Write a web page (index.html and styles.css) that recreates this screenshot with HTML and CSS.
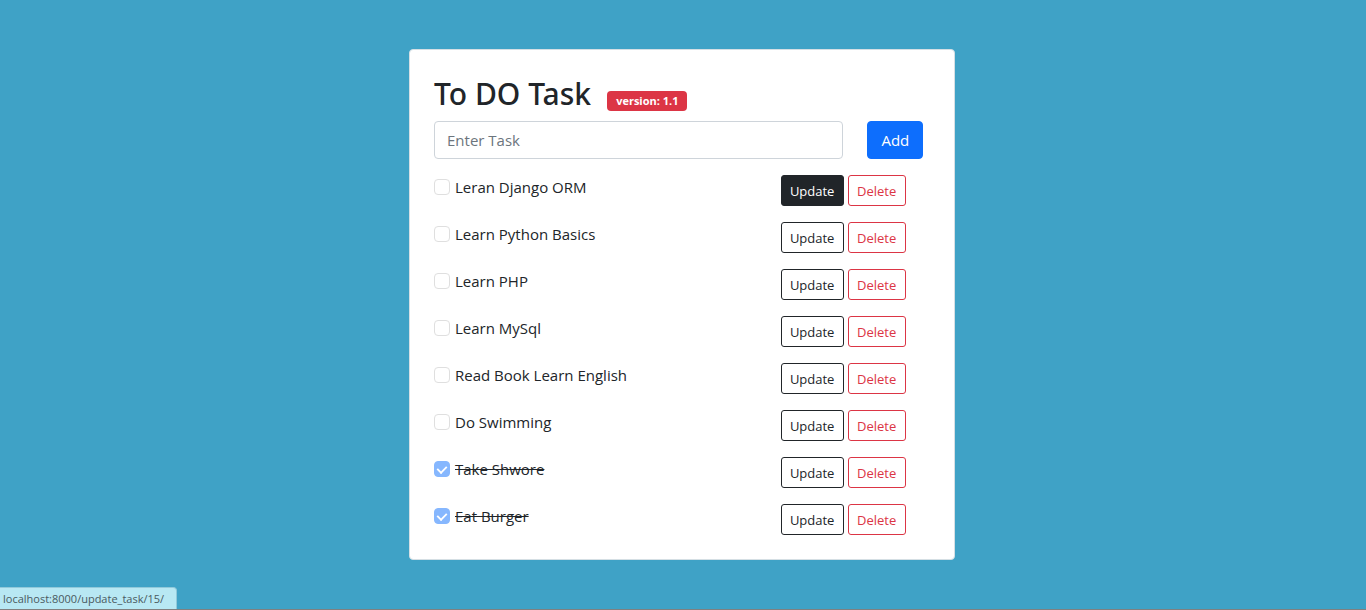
FILE: index.html
```html
<!DOCTYPE html>
<html lang="en">
<head>
<meta charset="utf-8">
<meta name="viewport" content="width=device-width, initial-scale=1">
<title>To DO Task</title>
<link rel="stylesheet" href="styles.css">
</head>
<body>
<main class="card">
  <header class="heading">
    <h1 class="title">To DO Task</h1>
    <span class="badge">version: 1.1</span>
  </header>
  <form class="add-form">
    <div class="field"><input class="task-input" type="text" placeholder="Enter Task" aria-label="Enter Task"></div>
    <div class="submit"><button class="btn btn-primary" type="submit">Add</button></div>
  </form>
  <ul class="tasks">
    <li class="task"><div class="check"><input type="checkbox" id="t1" disabled><label for="t1">Leran Django ORM</label></div><div class="actions"><a class="btn btn-small btn-dark active" href="#update">Update</a><a class="btn btn-small btn-danger" href="#delete">Delete</a></div></li>
    <li class="task"><div class="check"><input type="checkbox" id="t2" disabled><label for="t2">Learn Python Basics</label></div><div class="actions"><a class="btn btn-small btn-dark" href="#update">Update</a><a class="btn btn-small btn-danger" href="#delete">Delete</a></div></li>
    <li class="task"><div class="check"><input type="checkbox" id="t3" disabled><label for="t3">Learn PHP</label></div><div class="actions"><a class="btn btn-small btn-dark" href="#update">Update</a><a class="btn btn-small btn-danger" href="#delete">Delete</a></div></li>
    <li class="task"><div class="check"><input type="checkbox" id="t4" disabled><label for="t4">Learn MySql</label></div><div class="actions"><a class="btn btn-small btn-dark" href="#update">Update</a><a class="btn btn-small btn-danger" href="#delete">Delete</a></div></li>
    <li class="task"><div class="check"><input type="checkbox" id="t5" disabled><label for="t5">Read Book Learn English</label></div><div class="actions"><a class="btn btn-small btn-dark" href="#update">Update</a><a class="btn btn-small btn-danger" href="#delete">Delete</a></div></li>
    <li class="task"><div class="check"><input type="checkbox" id="t6" disabled><label for="t6">Do Swimming</label></div><div class="actions"><a class="btn btn-small btn-dark" href="#update">Update</a><a class="btn btn-small btn-danger" href="#delete">Delete</a></div></li>
    <li class="task done"><div class="check"><input type="checkbox" id="t7" checked disabled><label for="t7">Take Shwore</label></div><div class="actions"><a class="btn btn-small btn-dark" href="#update">Update</a><a class="btn btn-small btn-danger" href="#delete">Delete</a></div></li>
    <li class="task done"><div class="check"><input type="checkbox" id="t8" checked disabled><label for="t8">Eat Burger</label></div><div class="actions"><a class="btn btn-small btn-dark" href="#update">Update</a><a class="btn btn-small btn-danger" href="#delete">Delete</a></div></li>
  </ul>
</main>
<div class="status">localhost:8000/update_task/15/</div>
</body>
</html>
```

FILE: styles.css
```css
* {
  box-sizing: border-box;
}

body {
  margin: 0;
  min-height: 100vh;
  padding: 49px 14px 48px 12px;
  border-bottom: 1px solid #808080;
  background: #3fa2c6;
  color: #212529;
  font: 15px/24px "Segoe UI", "Open Sans", "Noto Sans", sans-serif;
}

.card {
  width: 100%;
  max-width: 546px;
  margin: 0 auto;
  padding: 24px;
  border: 1px solid #d5dfe4;
  border-radius: 4px;
  background: #fff;
}

.heading {
  display: flex;
  align-items: baseline;
  gap: 16px;
  margin-bottom: 7px;
}

.title {
  margin: 0;
  font-family: "Segoe UI", "Noto Sans", sans-serif;
  font-size: 30px;
  font-weight: 500;
  line-height: 40px;
}

.badge {
  padding: 4px 9px;
  border-radius: 4px;
  background: #dc3545;
  color: #fff;
  font-size: 11px;
  font-weight: 700;
  line-height: 12px;
}

.add-form {
  display: grid;
  grid-template-columns: 10fr 2fr;
  margin: 0 -12px 16px;
}

.field,
.submit {
  padding: 0 12px;
}

.task-input {
  display: block;
  width: 100%;
  height: 38px;
  padding: 6px 12px;
  border: 1px solid #ced4da;
  border-radius: 4px;
  background: #fff;
  color: #212529;
  font: inherit;
}

.task-input::placeholder {
  color: #6c757d;
  opacity: 1;
}

.btn {
  display: inline-block;
  padding: 6px 12px;
  border: 1px solid;
  border-radius: 4px;
  font: inherit;
  text-align: center;
  text-decoration: none;
  cursor: pointer;
}

.btn-primary {
  min-width: 56px;
  border-color: #0d6efd;
  background: #0d6efd;
  color: #fff;
}

.btn-small {
  padding: 5px 6px 3px;
  border-radius: 3px;
  font-size: 13px;
  line-height: 21px;
}

.btn-dark {
  min-width: 63px;
  border-color: #212529;
  color: #212529;
}

.btn-dark.active {
  background: #212529;
  color: #fff;
}

.btn-danger {
  min-width: 58px;
  border-color: #dc3545;
  color: #dc3545;
}

.tasks {
  display: grid;
  gap: 16px;
  margin: 0;
  padding: 0;
  list-style: none;
}

.task {
  display: grid;
  grid-template-columns: 8fr 4fr;
  margin: 0 -12px;
}

.check,
.actions {
  display: flex;
  align-items: flex-start;
  padding: 0 12px;
}

.check {
  gap: 5px;
}

.actions {
  gap: 4px;
}

.check input {
  appearance: none;
  flex: none;
  width: 16px;
  height: 16px;
  margin: 4px 0 0;
  border: 1px solid #dfdfdf;
  border-radius: 4px;
  background: #fff;
}

.check input:checked {
  display: grid;
  place-items: center;
  border-color: #86b7fe;
  background: #86b7fe;
}

.check input:checked::before {
  content: "";
  width: 8px;
  height: 5px;
  margin-bottom: 2px;
  border-bottom: 2px solid #fff;
  border-left: 2px solid #fff;
  transform: rotate(-45deg) scale(0.9);
}

.done label {
  text-decoration: line-through;
}

.status {
  position: fixed;
  bottom: 1px;
  left: 0;
  padding: 2px 12px 2px 3px;
  border-top: 1px solid #91c9da;
  border-right: 1px solid #91c9da;
  border-radius: 0 4px 0 0;
  background: #b8e8f3;
  color: #4a5a60;
  font-size: 11px;
  line-height: 17px;
}
```
